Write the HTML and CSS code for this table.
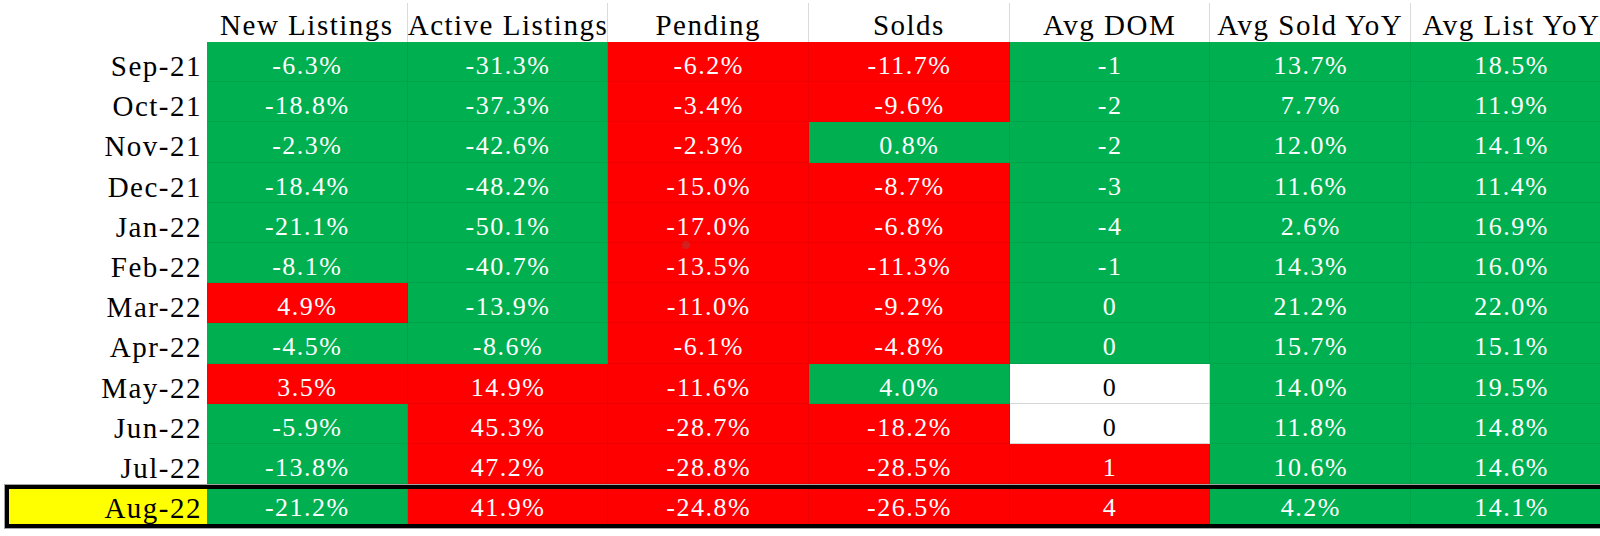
FILE: index.html
```html
<!DOCTYPE html>
<html lang="en">
<head>
<meta charset="utf-8">
<title>Market Stats YoY</title>
<link rel="stylesheet" href="styles.css">
</head>
<body>
<div class="sheet">
  <div class="row head">
    <div class="hc"></div>
    <div class="hc line">New Listings</div>
    <div class="hc line">Active Listings</div>
    <div class="hc line">Pending</div>
    <div class="hc line">Solds</div>
    <div class="hc line">Avg DOM</div>
    <div class="hc line">Avg Sold YoY</div>
    <div class="hc">Avg List YoY</div>
  </div>

  <div class="row"><div class="lab">Sep-21</div><div class="c g">-6.3%</div><div class="c g">-31.3%</div><div class="c r">-6.2%</div><div class="c r">-11.7%</div><div class="c g">-1</div><div class="c g">13.7%</div><div class="c g">18.5%</div></div>
  <div class="row"><div class="lab">Oct-21</div><div class="c g">-18.8%</div><div class="c g">-37.3%</div><div class="c r">-3.4%</div><div class="c r">-9.6%</div><div class="c g">-2</div><div class="c g">7.7%</div><div class="c g">11.9%</div></div>
  <div class="row"><div class="lab">Nov-21</div><div class="c g">-2.3%</div><div class="c g">-42.6%</div><div class="c r">-2.3%</div><div class="c g">0.8%</div><div class="c g">-2</div><div class="c g">12.0%</div><div class="c g">14.1%</div></div>
  <div class="row"><div class="lab">Dec-21</div><div class="c g">-18.4%</div><div class="c g">-48.2%</div><div class="c r">-15.0%</div><div class="c r">-8.7%</div><div class="c g">-3</div><div class="c g">11.6%</div><div class="c g">11.4%</div></div>
  <div class="row"><div class="lab">Jan-22</div><div class="c g">-21.1%</div><div class="c g">-50.1%</div><div class="c r">-17.0%</div><div class="c r">-6.8%</div><div class="c g">-4</div><div class="c g">2.6%</div><div class="c g">16.9%</div></div>
  <div class="row"><div class="lab">Feb-22</div><div class="c g">-8.1%</div><div class="c g">-40.7%</div><div class="c r">-13.5%</div><div class="c r">-11.3%</div><div class="c g">-1</div><div class="c g">14.3%</div><div class="c g">16.0%</div></div>
  <div class="row"><div class="lab">Mar-22</div><div class="c r">4.9%</div><div class="c g">-13.9%</div><div class="c r">-11.0%</div><div class="c r">-9.2%</div><div class="c g">0</div><div class="c g">21.2%</div><div class="c g">22.0%</div></div>
  <div class="row"><div class="lab">Apr-22</div><div class="c g">-4.5%</div><div class="c g">-8.6%</div><div class="c r">-6.1%</div><div class="c r">-4.8%</div><div class="c g">0</div><div class="c g">15.7%</div><div class="c g">15.1%</div></div>
  <div class="row"><div class="lab">May-22</div><div class="c r">3.5%</div><div class="c r">14.9%</div><div class="c r">-11.6%</div><div class="c g">4.0%</div><div class="c w">0</div><div class="c g">14.0%</div><div class="c g">19.5%</div></div>
  <div class="row"><div class="lab">Jun-22</div><div class="c g">-5.9%</div><div class="c r">45.3%</div><div class="c r">-28.7%</div><div class="c r">-18.2%</div><div class="c w">0</div><div class="c g">11.8%</div><div class="c g">14.8%</div></div>
  <div class="row"><div class="lab">Jul-22</div><div class="c g">-13.8%</div><div class="c r">47.2%</div><div class="c r">-28.8%</div><div class="c r">-28.5%</div><div class="c r">1</div><div class="c g">10.6%</div><div class="c g">14.6%</div></div>

  <div class="row cur"><div class="lab y">Aug-22</div><div class="c g">-21.2%</div><div class="c r">41.9%</div><div class="c r">-24.8%</div><div class="c r">-26.5%</div><div class="c r">4</div><div class="c g">4.2%</div><div class="c g">14.1%</div></div>

  <div class="cursor-dot"></div>
</div>
</body>
</html>
```

FILE: styles.css
```css
html, body {
  margin: 0;
  padding: 0;
  background: #ffffff;
}

.sheet {
  position: relative;
  width: 1600px;
  height: 536px;
  overflow: hidden;
  font-family: "Liberation Serif", "Times New Roman", serif;
  color: #000;
}

.row {
  display: grid;
  grid-template-columns: 207px repeat(7, 200.7px);
  height: 40.2px;
  box-sizing: border-box;
}

.head {
  height: 42px;
  padding-top: 3px;
  position: relative;
  z-index: 1;
}

.hc {
  box-sizing: border-box;
  text-align: center;
  font-size: 29px;
  letter-spacing: 1.5px;
  line-height: 30px;
  padding-top: 7px;
  white-space: nowrap;
}

.hc.line {
  border-right: 1px solid #dadada;
}

.lab {
  box-sizing: border-box;
  text-align: right;
  padding-right: 5px;
  padding-top: 9px;
  font-size: 29px;
  letter-spacing: 1.5px;
  line-height: 30px;
  white-space: nowrap;
  background: #fff;
}

.c {
  box-sizing: border-box;
  text-align: center;
  font-size: 26px;
  letter-spacing: 1.5px;
  line-height: 28px;
  padding-top: 10px;
  padding-left: 1px;
  color: #fff;
  white-space: nowrap;
  border-right: 1px solid rgba(0, 0, 0, 0.07);
  border-bottom: 1px solid rgba(0, 0, 0, 0.07);
}

.g { background: #00b050; }
.r { background: #ff0000; }
.w {
  background: #ffffff;
  color: #000;
  border-color: #d6d6d6;
}

.cur {
  grid-template-columns: 198px repeat(7, 200.7px);
  height: 43px;
  margin: 1px 0 0 5px;
  border: 4px solid #000;
  border-right: none;
  box-shadow: 0 0 0 1px #a3a3a3;
}

.cur .c {
  padding-top: 5px;
  border-bottom: none;
}

.cur .lab {
  padding-top: 4px;
}

.y { background: #ffff00; }

.cursor-dot {
  position: absolute;
  left: 682px;
  top: 241px;
  width: 8px;
  height: 8px;
  border-radius: 50%;
  background: rgba(110, 110, 110, 0.3);
}
```
